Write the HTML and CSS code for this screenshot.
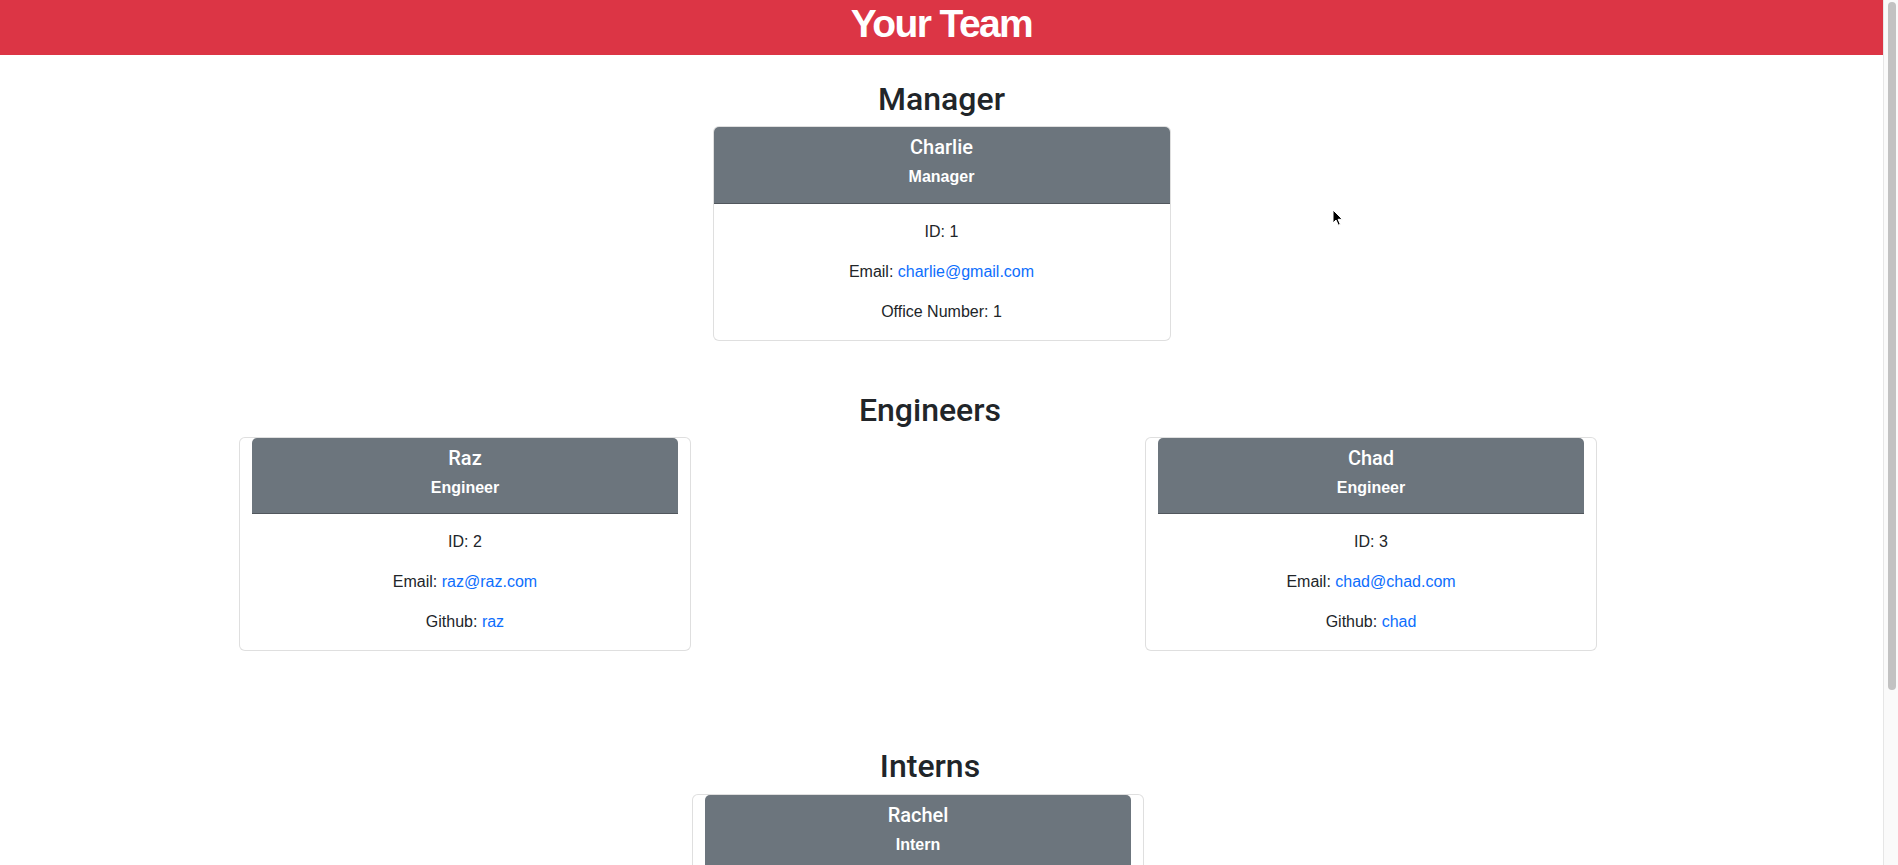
FILE: index.html
```html
<!DOCTYPE html>
<html lang="en">
<head>
<meta charset="utf-8">
<title>Your Team</title>
<link rel="stylesheet" href="styles.css">
</head>
<body>
<div class="page">
  <header class="topbar">
    <h1 class="topbar-title">Your Team</h1>
  </header>

  <section class="section section-manager">
    <h2 class="section-title">Manager</h2>
    <div class="card card-manager">
      <div class="card-header">
        <h5 class="card-name">Charlie</h5>
        <h6 class="card-role">Manager</h6>
      </div>
      <div class="card-body">
        <p>ID: 1</p>
        <p>Email: <a href="#">charlie@gmail.com</a></p>
        <p>Office Number: 1</p>
      </div>
    </div>
  </section>

  <section class="section section-engineers">
    <h2 class="section-title shifted">Engineers</h2>
    <div class="card-row spread">
      <div class="card card-inset">
        <div class="card-header">
          <h5 class="card-name">Raz</h5>
          <h6 class="card-role">Engineer</h6>
        </div>
        <div class="card-body">
          <p>ID: 2</p>
          <p>Email: <a href="#">raz@raz.com</a></p>
          <p>Github: <a href="#">raz</a></p>
        </div>
      </div>
      <div class="card card-inset">
        <div class="card-header">
          <h5 class="card-name">Chad</h5>
          <h6 class="card-role">Engineer</h6>
        </div>
        <div class="card-body">
          <p>ID: 3</p>
          <p>Email: <a href="#">chad@chad.com</a></p>
          <p>Github: <a href="#">chad</a></p>
        </div>
      </div>
    </div>
  </section>

  <section class="section section-interns">
    <h2 class="section-title shifted">Interns</h2>
    <div class="card-row centered">
      <div class="card card-inset">
        <div class="card-header">
          <h5 class="card-name">Rachel</h5>
          <h6 class="card-role">Intern</h6>
        </div>
        <div class="card-body">
          <p>ID: 4</p>
          <p>Email: <a href="#">rachel@rachel.com</a></p>
          <p>School: UCLA</p>
        </div>
      </div>
    </div>
  </section>

  <svg class="cursor" width="12" height="18" viewBox="0 0 12 18" aria-hidden="true">
    <path d="M1 1 L1 14 L4 11 L6.3 16.2 L8.3 15.3 L6.1 10.3 L10.3 10.3 Z" fill="#000" stroke="#fff" stroke-width="1" stroke-linejoin="round"/>
  </svg>
</div>
<div class="scrollbar">
  <div class="scrollbar-thumb"></div>
</div>
</body>
</html>
```

FILE: styles.css
```css
html, body {
  margin: 0;
  padding: 0;
  height: 865px;
  overflow: hidden;
}

body {
  display: flex;
  background: #fff;
  font-family: "Liberation Sans", Arial, sans-serif;
  color: #212529;
  font-size: 16px;
  line-height: 1.5;
}

.page {
  flex: 1;
  position: relative;
  min-width: 0;
}

.topbar {
  height: 55px;
  background: #dc3545;
  display: flex;
  justify-content: center;
  align-items: flex-start;
}

.topbar-title {
  margin: 0;
  padding-top: 1px;
  color: #fff;
  font-size: 39px;
  font-weight: 700;
  line-height: 46px;
  letter-spacing: -1.6px;
}

.section-title {
  margin: 0 0 8px;
  text-align: center;
  font-family: Roboto, "Liberation Sans", Arial, sans-serif;
  font-size: 32px;
  font-weight: 500;
  line-height: 1.2;
  color: #212529;
}

.section-title.shifted {
  padding-right: 23px;
}

.section-manager {
  padding-top: 25px;
}

.section-engineers {
  margin-top: 50px;
}

.section-interns {
  margin-top: 96px;
}

.card {
  width: 452px;
  background: #fff;
  border: 1px solid rgba(0, 0, 0, 0.125);
  border-radius: 6px;
  box-sizing: border-box;
}

.card-manager {
  width: 458px;
  margin: 0 auto;
}

.card-row {
  display: flex;
  width: 1358px;
  margin-left: 239px;
}

.card-row.spread {
  justify-content: space-between;
}

.card-row.centered {
  justify-content: center;
}

.card-header {
  background: #6c757d;
  color: #fff;
  text-align: center;
  padding: 8px 16px;
  border-bottom: 1px solid rgba(0, 0, 0, 0.25);
  border-radius: 5px 5px 0 0;
}

.card-inset .card-header {
  margin: 0 12px;
}

.card-name {
  margin: 0 0 8px;
  font-family: Roboto, "Liberation Sans", Arial, sans-serif;
  font-size: 20px;
  font-weight: 500;
  line-height: 1.2;
}

.card-role {
  margin: 0 0 8px;
  font-size: 16px;
  font-weight: 700;
  line-height: 1.2;
}

.card-body {
  padding: 16px;
  text-align: center;
}

.card-body p {
  margin: 0 0 16px;
}

.card-body p:last-child {
  margin-bottom: 0;
}

.card-body a {
  color: #0d6efd;
  text-decoration: none;
}

.cursor {
  position: absolute;
  left: 1332px;
  top: 209px;
}

.scrollbar {
  width: 15px;
  flex: 0 0 15px;
  box-sizing: border-box;
  background: #fafafa;
  border-left: 1px solid #e6e6e6;
  padding: 2px 2px 0 4px;
}

.scrollbar-thumb {
  width: 8px;
  height: 688px;
  background: #c2c2c2;
  border-radius: 4px;
}
```
